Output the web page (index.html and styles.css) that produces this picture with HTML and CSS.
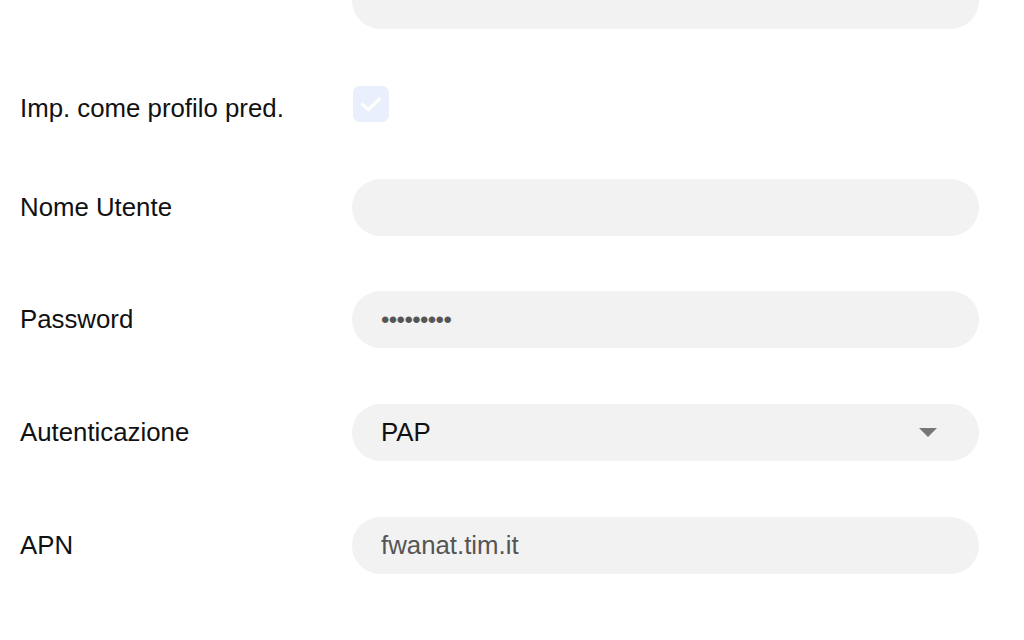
FILE: index.html
```html
<!DOCTYPE html>
<html lang="it">
<head>
<meta charset="utf-8">
<title>Profilo</title>
<link rel="stylesheet" href="styles.css">
</head>
<body>
<div class="form">
  <div class="row">
    <div class="label"></div>
    <div class="field"></div>
  </div>
  <div class="row row-check">
    <div class="label">Imp. come profilo pred.</div>
    <div class="checkbox">
      <svg width="22" height="16" viewBox="0 0 22 16"><path d="M2.5 8.5 L8.5 13.5 L19.5 3" fill="none" stroke="#ffffff" stroke-width="3.2" stroke-linecap="round" stroke-linejoin="round"/></svg>
    </div>
  </div>
  <div class="row">
    <div class="label">Nome Utente</div>
    <div class="field"></div>
  </div>
  <div class="row">
    <div class="label">Password</div>
    <div class="field"><span class="dots">&#8226;&#8226;&#8226;&#8226;&#8226;&#8226;&#8226;&#8226;&#8226;</span></div>
  </div>
  <div class="row">
    <div class="label">Autenticazione</div>
    <div class="field select"><span class="value">PAP</span><span class="caret"></span></div>
  </div>
  <div class="row">
    <div class="label">APN</div>
    <div class="field"><span class="muted">fwanat.tim.it</span></div>
  </div>
</div>
</body>
</html>
```
FILE: styles.css
```css
html, body {
  margin: 0;
  padding: 0;
  background: #ffffff;
}
body {
  font-family: "Liberation Sans", Arial, sans-serif;
  color: #111111;
  overflow: hidden;
}
.form {
  display: flex;
  flex-direction: column;
  gap: 55.6px;
  margin-top: -28px;
  padding-left: 20px;
}
.row {
  display: flex;
  align-items: center;
}
.label {
  width: 332px;
  flex: none;
  font-size: 25.8px;
  color: #111111;
}
.field {
  width: 627px;
  height: 57px;
  box-sizing: border-box;
  background: #f2f2f2;
  border-radius: 29px;
  display: flex;
  align-items: center;
  padding-left: 29px;
  padding-right: 42px;
  font-size: 25.8px;
}
.row-check {
  align-items: flex-start;
  height: 38.6px;
}
.row-check .label {
  padding-top: 9px;
}
.checkbox {
  margin-left: 1px;
  margin-top: 1px;
  width: 36px;
  height: 36px;
  border-radius: 7px;
  background: #e9effc;
  display: flex;
  align-items: center;
  justify-content: center;
}
.dots {
  color: #555555;
  font-size: 24px;
  letter-spacing: -0.6px;
}
.select {
  justify-content: space-between;
}
.value {
  color: #111111;
}
.caret {
  width: 0;
  height: 0;
  border-left: 9px solid transparent;
  border-right: 9px solid transparent;
  border-top: 9px solid #777777;
}
.muted {
  color: #555555;
}
```
